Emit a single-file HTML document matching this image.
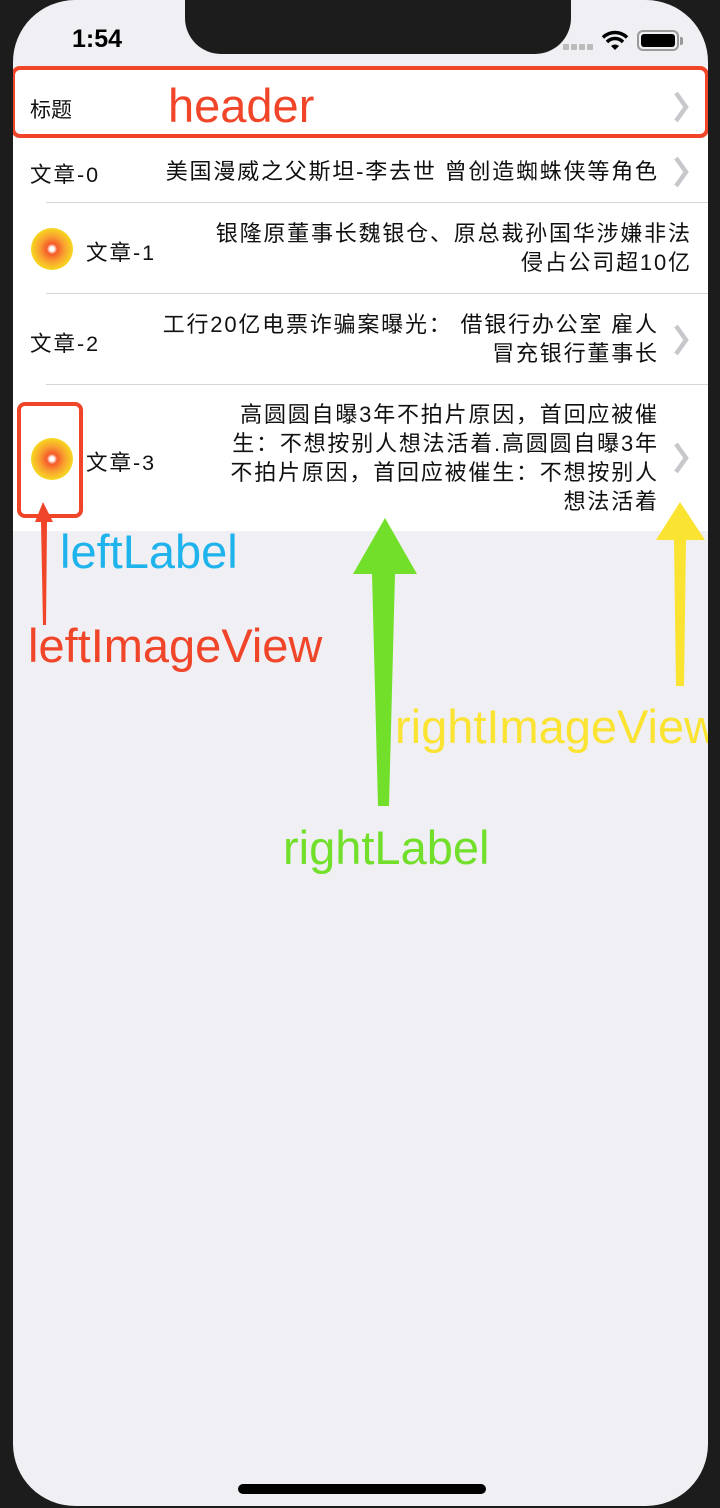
<!DOCTYPE html><html><head><meta charset="utf-8"><style>
*{margin:0;padding:0;box-sizing:border-box}
body{width:720px;height:1508px;background:#1c1c1c;position:relative;overflow:hidden;font-family:"Liberation Sans","Noto Sans CJK SC",sans-serif}
.scr{position:absolute;left:13px;top:0;width:695px;height:1506px;background:#efeff4;border-radius:62px;overflow:hidden}
.notch{position:absolute;left:172px;top:-2px;width:386px;height:56px;background:#1c1c1c;border-radius:0 0 36px 36px}
.abs{position:absolute}
.row{position:absolute;left:0;width:695px;background:#fff}
.t{position:absolute;font-size:21.5px;color:#111;white-space:nowrap;letter-spacing:2px}
.r{position:absolute;font-size:22px;color:#111;text-align:right;line-height:29px;white-space:nowrap;letter-spacing:1.8px;margin-right:-1.8px}
.a{position:absolute;font-size:47px;white-space:nowrap;line-height:1}
.sep{position:absolute;left:33px;right:0;height:1px;background:#d6d6da}
.chev{position:absolute;width:18px;height:32px}
</style></head><body>
<div class="scr">
<div class="notch"></div>
<div class="t" style="left:59px;top:25px;font-size:25px;font-weight:bold;color:#000;letter-spacing:0">1:54</div>
<div class="abs" style="left:550px;top:44px;width:32px;height:6px;display:flex;gap:2px"><i style="width:6px;height:6px;background:#bbb;border-radius:1px"></i><i style="width:6px;height:6px;background:#bbb;border-radius:1px"></i><i style="width:6px;height:6px;background:#bbb;border-radius:1px"></i><i style="width:6px;height:6px;background:#bbb;border-radius:1px"></i></div>
<svg class="abs" style="left:588px;top:30px" width="28" height="22" viewBox="0 0 28 22"><path d="M14 20 L10 16 A6 6 0 0 1 18 16Z" fill="#000"/><path d="M6 12 A11 11 0 0 1 22 12" stroke="#000" stroke-width="3.5" fill="none"/><path d="M2 7.5 A17 17 0 0 1 26 7.5" stroke="#000" stroke-width="3.5" fill="none"/></svg>
<div class="abs" style="left:624px;top:30px;width:42px;height:21px;border:2px solid #999;border-radius:6px;padding:2px"><div style="width:100%;height:100%;background:#000;border-radius:3px"></div></div>
<div class="abs" style="left:667px;top:37px;width:3px;height:8px;background:#999;border-radius:0 2px 2px 0"></div>

<div class="row" style="top:68px;height:70px"></div>
<div class="t" style="left:17px;top:94px;font-size:21px;letter-spacing:0">标题</div>
<div class="a" style="left:155px;top:82px;color:#f1452a">header</div>
<svg class="chev" style="left:659px;top:91px" viewBox="0 0 18 32"><path d="M4 2 L14 16 L4 30" stroke="#c7c7cc" stroke-width="4.5" fill="none"/></svg>
<div class="abs" style="left:-2px;top:66px;width:698px;height:72px;border:4px solid #f1452a;border-radius:9px"></div>

<div class="row" style="top:138px;height:393px"></div>
<div class="t" style="left:17px;top:158px">文章-0</div>
<div class="r" style="right:51px;top:157px">美国漫威之父斯坦-李去世 曾创造蜘蛛侠等角色</div>
<svg class="chev" style="left:659px;top:156px" viewBox="0 0 18 32"><path d="M4 2 L14 16 L4 30" stroke="#c7c7cc" stroke-width="4.5" fill="none"/></svg>
<div class="sep" style="top:202px"></div>

<svg class="abs" style="left:17px;top:227px" width="44" height="44" viewBox="0 0 44 44"><defs><radialGradient id="g"><stop offset="0.1" stop-color="#fff"/><stop offset="0.25" stop-color="#f55a2a"/><stop offset="0.6" stop-color="#f9a030"/><stop offset="1" stop-color="#f6d820"/></radialGradient></defs><ellipse cx="22" cy="22" rx="21" ry="21" fill="url(#g)"/></svg>
<div class="t" style="left:73px;top:236px">文章-1</div>
<div class="r" style="right:18px;top:219px">银隆原董事长魏银仓、原总裁孙国华涉嫌非法<br>侵占公司超10亿</div>
<div class="sep" style="top:293px"></div>

<div class="t" style="left:17px;top:327px">文章-2</div>
<div class="r" style="right:51px;top:310px">工行20亿电票诈骗案曝光： 借银行办公室 雇人<br>冒充银行董事长</div>
<svg class="chev" style="left:659px;top:324px" viewBox="0 0 18 32"><path d="M4 2 L14 16 L4 30" stroke="#c7c7cc" stroke-width="4.5" fill="none"/></svg>
<div class="sep" style="top:384px"></div>

<svg class="abs" style="left:17px;top:437px" width="44" height="44" viewBox="0 0 44 44"><ellipse cx="22" cy="22" rx="21" ry="21" fill="url(#g)"/></svg>
<div class="t" style="left:73px;top:446px">文章-3</div>
<div class="r" style="right:51px;top:400px">高圆圆自曝3年不拍片原因，首回应被催<br>生：不想按别人想法活着.高圆圆自曝3年<br>不拍片原因，首回应被催生：不想按别人<br>想法活着</div>
<svg class="chev" style="left:659px;top:442px" viewBox="0 0 18 32"><path d="M4 2 L14 16 L4 30" stroke="#c7c7cc" stroke-width="4.5" fill="none"/></svg>
<div class="abs" style="left:4px;top:402px;width:66px;height:116px;border:4px solid #f1452a;border-radius:8px"></div>

<div class="a" style="left:47px;top:528px;color:#1fb3ec">leftLabel</div>
<div class="a" style="left:15px;top:622px;color:#f1452a">leftImageView</div>
<div class="a" style="left:382px;top:703px;color:#fbe332">rightImageView</div>
<div class="a" style="left:270px;top:824px;color:#72e02a">rightLabel</div>
</div>
<svg class="abs" style="left:0;top:0" width="720" height="1508">
<path d="M43 502 L35 522 L41 522 L43 625 L46 625 L47 522 L53 522Z" fill="#f1452a"/>
<path d="M385 518 L353 574 L372 574 L378 806 L389 806 L395 574 L417 574Z" fill="#72e02a"/>
<path d="M680 502 L656 540 L674 540 L676 686 L684 686 L686 540 L705 540Z" fill="#fbe332"/>
<rect x="238" y="1484" width="248" height="10" rx="5" fill="#000"/>
</svg>
</body></html>
